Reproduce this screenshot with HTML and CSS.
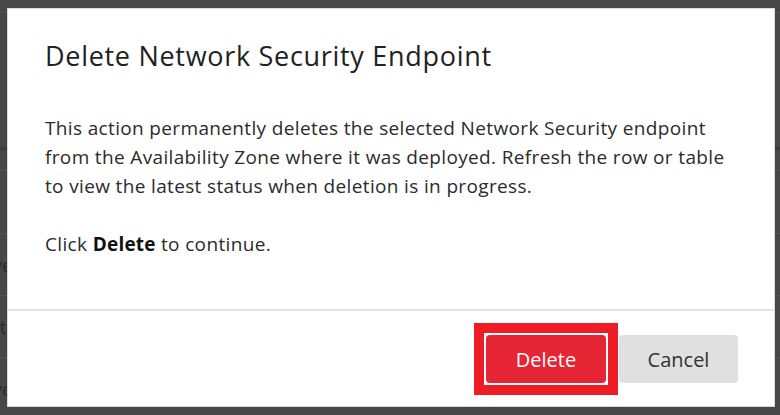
FILE: index.html
```html
<!DOCTYPE html>
<html lang="en">
<head>
<meta charset="utf-8">
<title>Delete Network Security Endpoint</title>
<link rel="stylesheet" href="styles.css">
</head>
<body>
<div class="page">
  <div class="row r1"></div>
  <div class="row r2"></div>
  <div class="row r3"></div>
  <div class="row r4"><span class="cell">Active</span></div>
  <div class="row r4"><span class="cell">Deleted</span></div>
  <div class="row r4"><span class="cell">Active</span></div>
</div>
<div class="modal" role="dialog" aria-labelledby="dlg-title">
  <div class="modal-body">
    <h1 id="dlg-title" class="modal-title">Delete Network Security Endpoint</h1>
    <p class="text">This action permanently deletes the selected Network Security endpoint from the Availability Zone where it was deployed. Refresh the row or table to view the latest status when deletion is in progress.</p>
    <p class="text">Click <strong>Delete</strong> to continue.</p>
  </div>
  <div class="modal-footer">
    <span class="highlight"><button class="btn btn-danger" type="button">Delete</button></span>
    <button class="btn btn-secondary" type="button">Cancel</button>
  </div>
</div>
</body>
</html>
```

FILE: styles.css
```css
html, body {
  margin: 0;
  padding: 0;
  height: 100%;
}
body {
  background: #474747;
  font-family: "Open Sans", "Noto Sans", "Liberation Sans", sans-serif;
  color: #222;
  overflow: hidden;
}
.page {
  display: flex;
  flex-direction: column;
  padding-top: 12px;
}
.row {
  border-top: 1px solid #535353;
  color: #2a2a2a;
  font-size: 18px;
  display: flex;
  align-items: center;
  padding-left: 2px;
}
.r1 { height: 134px; }
.r2 { height: 20px; border-top: 3px solid #3c3c3c; }
.r3 { height: 62px; }
.r4 { height: 61px; }
.cell { margin-left: -40px; }

.modal {
  position: fixed;
  top: 8px;
  left: 7px;
  width: 768px;
  height: 399px;
  box-sizing: border-box;
  background: #fff;
  border: 1px solid #d9d9d9;
  display: flex;
  flex-direction: column;
}
.modal-body {
  flex: 1;
  padding: 29px 37px 0;
  border-bottom: 2px solid #e3e3e3;
}
.modal-title {
  margin: 0 0 40px;
  font-size: 27px;
  letter-spacing: 0.7px;
  font-weight: 400;
  line-height: 36px;
  color: #222;
}
.text {
  margin: 0 0 29px;
  font-size: 19px;
  letter-spacing: 0.35px;
  line-height: 29px;
  color: #2b2b2b;
}
.text strong { font-weight: 700; color: #111; letter-spacing: 0.2px; }

.modal-footer {
  display: flex;
  justify-content: flex-end;
  align-items: center;
  gap: 13px;
  padding: 24px 36px 23px;
}
.btn {
  width: 120px;
  height: 48px;
  border: none;
  border-radius: 4px;
  font-family: inherit;
  font-size: 20px;
  cursor: pointer;
  display: block;
}
.btn-danger {
  background: #e52534;
  color: #fff;
}
.btn-secondary {
  background: #e0e0e0;
  color: #333;
  width: 119px;
}
.highlight {
  display: flex;
  margin: -12px;
  padding: 2px;
  background: #fff;
  border: 10px solid #ee1c25;
}
```
